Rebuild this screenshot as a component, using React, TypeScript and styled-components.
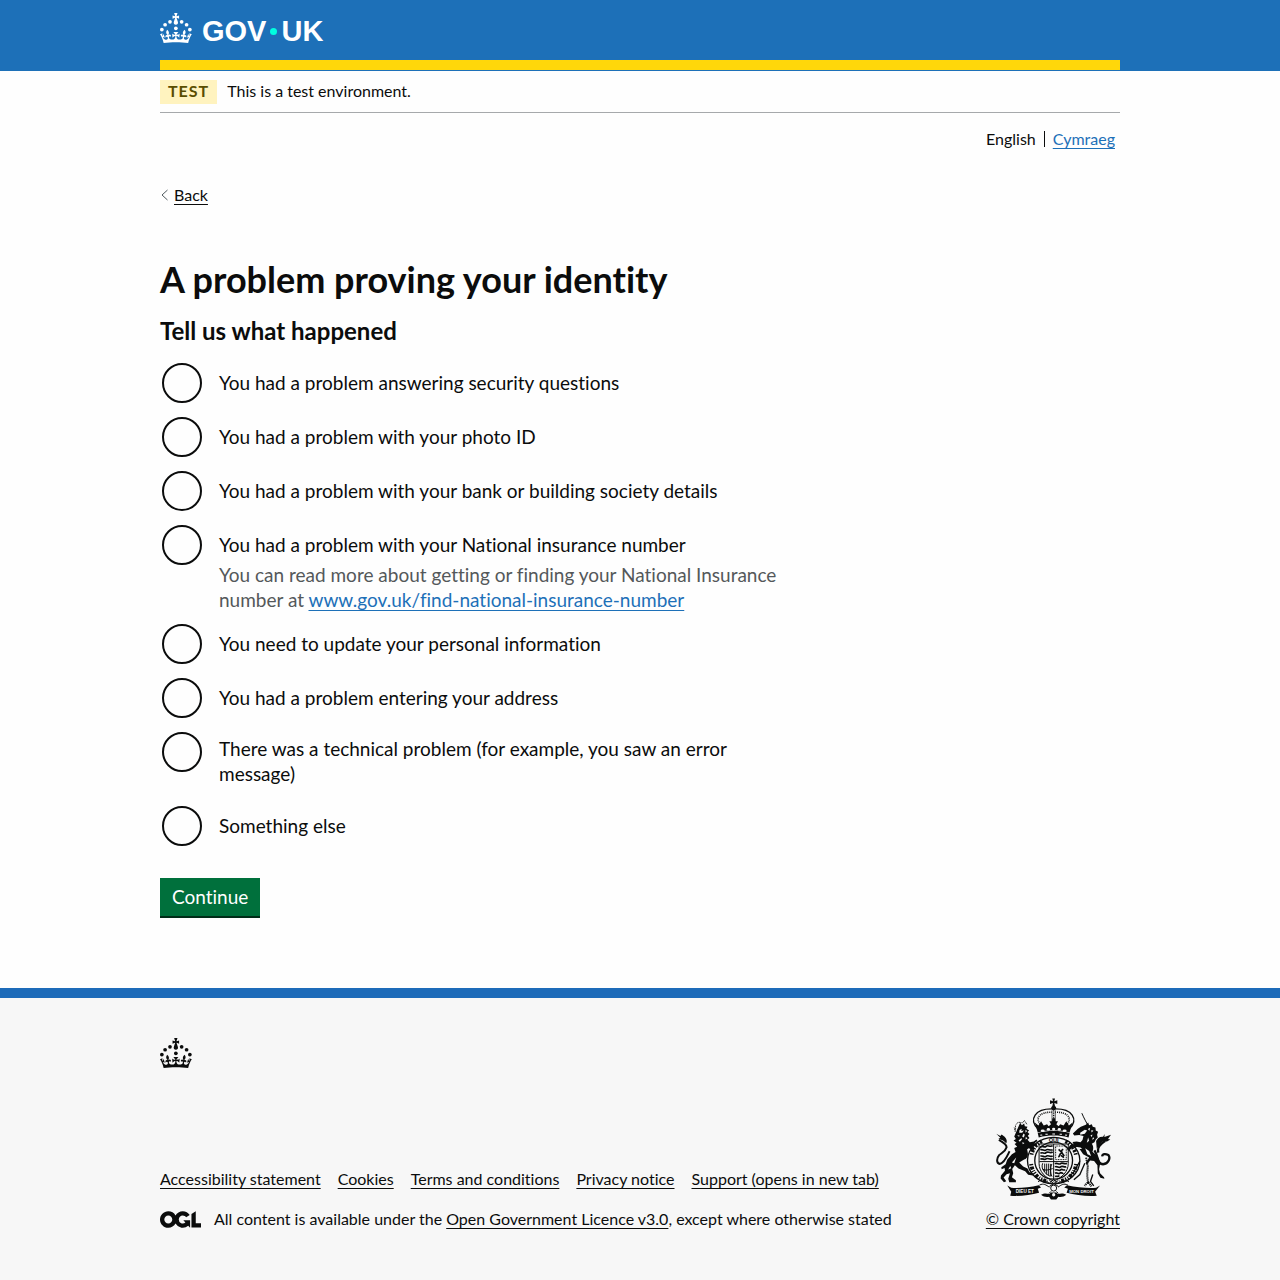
import React from "react";
import styled, { createGlobalStyle } from "styled-components";

const ink = "#0b0c0c";
const blue = "#1d70b8";

const GlobalStyle = createGlobalStyle`
  *, *::before, *::after { box-sizing: border-box; }
  html { background: #f7f7f7; }
  body {
    margin: 0;
    background: #fefefe;
    color: ${ink};
    font-family: Lato, "Open Sans", sans-serif;
    font-size: 16px;
    line-height: 20px;
    font-variant-ligatures: none;
  }
`;

const Container = styled.div`
  max-width: 960px;
  margin: 0 auto;
  @media (max-width: 1020px) { margin: 0 30px; }
`;

const Link = styled.a<{ $tone?: "link" }>`
  color: ${p => (p.$tone === "link" ? blue : ink)};
  text-decoration: underline;
  text-decoration-thickness: 1px;
  text-underline-offset: 3px;
  text-decoration-skip-ink: none;
`;

const Header = styled.header`
  background: ${blue};
  padding-bottom: 1px;
`;

const HeaderInner = styled(Container)`
  border-bottom: 10px solid #ffd70a;
  padding: 13px 0 17px;
`;

const HomeLink = styled.a`
  display: inline-flex;
  align-items: center;
  gap: 10px;
  height: 30px;
  color: #fff;
  text-decoration: none;
  vertical-align: top;
`;

const Wordmark = styled.span`
  display: flex;
  align-items: center;
  gap: 4px;
  padding-top: 6px;
  font: 700 29px/30px "Liberation Sans", Arial, sans-serif;
`;

const Dot = styled.span`
  width: 7px;
  height: 7px;
  border-radius: 50%;
  background: #00ffe0;
`;

const Crown = styled.svg`
  display: block;
  width: 32px;
  height: 30px;
  fill: currentColor;
`;

const PhaseBanner = styled.div`
  display: flex;
  align-items: center;
  gap: 10px;
  padding: 9px 0 8px;
  border-bottom: 1px solid #a6a9ab;
`;

const Tag = styled.strong`
  padding: 1px 8px 3px;
  background: #fff3bf;
  color: #594d00;
  letter-spacing: 1px;
`;

const PhaseText = styled.span`
  padding-bottom: 2px;
`;

const Languages = styled.nav`
  display: flex;
  justify-content: flex-end;
  margin-top: 16px;
  padding-right: 5px;
`;

const Language = styled.span`
  display: flex;
  align-items: center;
  & + & { margin-left: 8px; }
  & + &::before {
    content: "";
    height: 16px;
    margin-right: 8px;
    border-left: 1px solid ${ink};
  }
`;

const BackRow = styled.div`
  display: flex;
  align-items: center;
  gap: 6px;
  margin-top: 36px;
`;

const Chevron = styled.svg`
  width: 8px;
  height: 12px;
  fill: none;
  stroke: #505a5f;
`;

const Main = styled.main`
  max-width: 640px;
  padding: 54px 0 70px;
`;

const Title = styled.h1`
  margin: 0 0 17px;
  font-size: 36px;
  line-height: 40px;
`;

const Fieldset = styled.fieldset`
  margin: 0 0 30px;
  padding: 0;
  border: 0;
  min-width: 0;
`;

const Legend = styled.legend`
  margin-bottom: 15px;
  padding: 0;
  font-size: 24px;
  font-weight: 700;
  line-height: 30px;
`;

const Options = styled.div`
  display: grid;
  gap: 10px;
`;

const Option = styled.div`
  display: flex;
  gap: 15px;
  align-items: flex-start;
  font-size: 19px;
  line-height: 25px;
`;

const Radio = styled.input`
  flex: none;
  appearance: none;
  width: 40px;
  height: 40px;
  margin: 2px;
  border: 2px solid ${ink};
  border-radius: 50%;
  cursor: pointer;
  &:checked { box-shadow: inset 0 0 0 8px #fff; background: ${ink}; }
  &:focus { outline: 4px solid #ffdd00; outline-offset: 1px; }
`;

const Label = styled.label`
  display: flex;
  align-items: center;
  min-height: 44px;
  padding: 6px 0 8px;
`;

const Hint = styled.div`
  margin-top: -5px;
  color: #54585a;
`;

const Button = styled.button`
  display: block;
  margin: 0 0 2px;
  padding: 6px 12px 7px;
  border: 0;
  background: #00703c;
  box-shadow: 0 2px 0 #002d18;
  color: #fff;
  font: inherit;
  font-size: 19px;
  line-height: 25px;
  cursor: pointer;
`;

const Footer = styled.footer`
  border-top: 10px solid #1d6bb9;
  padding: 40px 0 51px;
  background: #f7f7f7;
`;

const FooterMeta = styled.div`
  display: flex;
  flex-wrap: wrap;
  align-items: flex-end;
  justify-content: space-between;
  gap: 20px;
  margin-top: 30px;
`;

const FooterLinks = styled.ul`
  display: flex;
  flex-wrap: wrap;
  gap: 10px 17px;
  margin: 0 0 20px;
  padding: 0;
  list-style: none;
`;

const Licence = styled.div`
  display: flex;
  align-items: center;
  gap: 13px;
`;

const OglLogo = styled.svg`
  flex: none;
  width: 41px;
  height: 17px;
`;

const Copyright = styled.div`
  display: flex;
  flex-direction: column;
  align-items: center;
  gap: 9px;
`;

const ArmsSvg = styled.svg`
  display: block;
  width: 116px;
  height: 102px;
  color: ${ink};
`;

const CrownIcon = () => (
  <Crown viewBox="0 0 64 60" aria-hidden="true">
    <circle cx="20" cy="17.6" r="3.7" />
    <circle cx="10.2" cy="23.5" r="3.7" />
    <circle cx="3.7" cy="33.2" r="3.7" />
    <circle cx="31.7" cy="30.6" r="3.7" />
    <circle cx="43.3" cy="17.6" r="3.7" />
    <circle cx="53.2" cy="23.5" r="3.7" />
    <circle cx="59.7" cy="33.2" r="3.7" />
    <path d="M33.1,9.8c.2-.1.3-.3.5-.5l4.6,2.4v-6.8l-4.6,1.5c-.1-.2-.3-.3-.5-.5l1.9-5.9h-6.7l1.9,5.9c-.2.1-.3.3-.5.5l-4.6-1.5v6.8l4.6-2.4c.1.2.3.3.5.5l-2.6,8c-.9,2.8,1.2,5.7,4.1,5.7h0c3,0,5.1-2.9,4.1-5.7l-2.6-8ZM37,37.9s-3.4,3.8-4.1,6.1c2.2,0,4.2-.5,6.4-2.8l-.7,8.5c-2-2.8-4.4-4.1-5.7-3.8.1,3.1.5,6.7,5.8,7.2,3.7.3,6.7-1.5,7-3.8.4-2.6-2-4.3-3.7-1.6-1.4-4.5,2.4-6.1,4.9-3.2-1.9-4.5-1.8-7.7,2.4-10.9,3,4,2.6,7.3-1.2,11.1,2.4-1.3,6.2,0,4,4.6-1.2-2.8-3.7-2.2-4.2.2-.3,1.7.7,3.7,3,4.2,1.9.3,4.7-.9,7-5.9-1.3,0-2.4.7-3.9,1.7l2.4-8c.6,2.3,1.4,3.7,2.2,4.5.6-1.6.5-2.8,0-5.3l5,1.8c-2.6,3.6-5.2,8.7-7.3,17.5-7.4-1.1-15.7-1.7-24.5-1.7h0c-8.8,0-17.1.6-24.5,1.7-2.1-8.9-4.7-13.9-7.3-17.5l5-1.8c-.5,2.5-.6,3.7,0,5.3.8-.8,1.6-2.3,2.2-4.5l2.4,8c-1.5-1-2.6-1.7-3.9-1.7,2.3,5,5.2,6.2,7,5.9,2.3-.4,3.3-2.4,3-4.2-.5-2.4-3-3.1-4.2-.2-2.2-4.6,1.6-6,4-4.6-3.7-3.7-4.2-7.1-1.2-11.1,4.2,3.2,4.3,6.4,2.4,10.9,2.5-2.8,6.3-1.3,4.9,3.2-1.8-2.7-4.1-1-3.7,1.6.3,2.3,3.3,4.1,7,3.8,5.4-.5,5.7-4.2,5.8-7.2-1.3-.2-3.7,1-5.7,3.8l-.7-8.5c2.2,2.3,4.2,2.7,6.4,2.8-.7-2.3-4.1-6.1-4.1-6.1h10.6,0Z" />
  </Crown>
);

const RoyalArms = () => (
  <ArmsSvg viewBox="46 24 350 306" role="img" aria-label="Royal coat of arms" fill="currentColor" stroke="none">
    {/* crown */}
    <path d="M219 25h8l-2 8 9-3v11l-9-3 2 9c5 3 5 9 0 12h-8c-5-3-5-9 0-12l2-9-9 3V30l9 3z" />
    <g fill="none" stroke="currentColor">
      <path strokeWidth="4" d="M176 117C146 86 168 55 219 56M270 117c30-31 8-62-43-61" />
      <path strokeWidth="5" strokeDasharray="3 3" d="M182 102c-16-21 2-37 36-36M264 102c16-21-2-37-36-36" />
      <path strokeWidth="2" d="M218 60v38M228 60v38" />
      <path strokeWidth="4" strokeDasharray="4 3" d="M223 60v40" />
    </g>
    <path d="M166 97l11 9 8-13 8 13 10-4 5 6 7-6-5-9h8l1-9h8l1 9h8l-5 9 7 6 5-6 10 4 8-13 8 13 11-9-9 30c-30-9-66-9-96 0z" />
    <path d="M175 129c30-8 66-8 96 0l-3 13c-29-8-61-8-90 0z" />
    <g fill="#f7f7f7">
      <ellipse cx="190" cy="122" rx="6" ry="4" /><ellipse cx="207" cy="118" rx="5" ry="4" />
      <ellipse cx="223" cy="117" rx="5" ry="4" /><ellipse cx="240" cy="118" rx="5" ry="4" />
      <ellipse cx="256" cy="122" rx="6" ry="4" />
      <path d="M182 134l6-1 1 3-6 1zM198 131h7v3h-7zM219 130h8v3h-8zM241 131h7v3h-7zM258 133l6 1-1 3-6-1z" />
    </g>
    {/* garter */}
    <g fill="none" stroke="currentColor">
      <ellipse cx="223" cy="212" rx="79" ry="70" strokeWidth="4" />
      <ellipse cx="223" cy="212" rx="57" ry="56" strokeWidth="4" />
      <path strokeWidth="12" strokeDasharray="4 4 9 4 3 4" d="M155 222c4 30 24 48 50 53M291 222c-4 30-24 48-50 53" />
      <path strokeWidth="12" strokeDasharray="4 4 7 4" d="M156 194c5-20 15-32 32-41M290 194c-5-20-15-32-32-41" />
    </g>
    <text x="223" y="157" textAnchor="middle" fontFamily="Liberation Sans, sans-serif" fontWeight="700" fontSize="17">QUI</text>
    {/* quartered shield */}
    <path fill="none" stroke="currentColor" strokeWidth="3" d="M179 162h88v59c0 24-18 42-44 53-26-11-44-29-44-53zM223 162v108M180 215h86" />
    <g fill="none" stroke="currentColor" strokeWidth="5">
      <path d="M183 171c6-6 12 4 17-2s12 4 20-2M183 180c6-4 12 5 17 0s12 3 20-1M183 190c6-6 12 4 17-2s12 4 20-2M183 199c6-4 12 5 17 0s12 3 20-1M183 208c6-5 12 4 17-1s12 4 20-1" />
      <path d="M227 222c6-5 12 4 17-1s12 4 19-1M227 231c6-4 12 5 17 0s12 3 17-1M227 241c6-5 12 4 17-1s8 4 14-1M227 250c6-4 10 5 15 0s6 3 10-1M227 260c5-3 8 3 13-3" />
      <path strokeWidth="3" strokeDasharray="3 2" d="M229 168h32v41h-32z" />
      <path strokeWidth="5" d="M237 201c6-2 2-9 9-11s-6-6 6-12M238 178l8 8 9 12M254 203l-9-7" />
      <path strokeWidth="3" d="M190 220c-7 15 7 33 22 39M196 221v26M202 221v33M208 221v36M214 222v38M218 222c-5 7-7 26 0 38M190 238c8 5 18 2 30-2" />
    </g>
    {/* lion */}
    <path d="M118 107l4-9 5 7 7-5 2 8 8 2-3 6 8 5-5 5 6 6-5 5 5 7-6 5 7 8 12-3 8-6 3 5-9 7 8 3-2 5-12 1 7 7-4 5-14-6-5 3 2 11c2 10-4 18-11 20l-15 9 12 12 13 6 6 11 9 2 2 8-15-2-9-11-20-8-11-10-8 11 3 13-4 12 12 9v6H89l-3-10 5-17-10 3-9 10 8 11-7 3-10-11 1-9 12-14-1-9-9 4-1-6 13-9 5-14 14-16 11-7-4-12 9-4-8-8 6-4-9-7 7-4-5-8z" />
    <path fill="#f7f7f7" d="M120 120l7-4-2 7 8-2-5 7-9 0zM113 135l8 2-3 3zM128 139l4-9 4 4-3 8zM117 151l9-7 1 4-6 7zM138 119l5 4-5 5zM139 140l5 5-6 3zM128 157l7 2-5 4zM97 218l13-15-6 17zM86 239l6-11 3 7z" />
    <path fill="none" stroke="currentColor" strokeWidth="3" strokeDasharray="3 2" d="M108 121v-16l8-9 13 2 6-7 8 13M107 125l-3-13" />
    <path fill="none" stroke="currentColor" strokeWidth="6" d="M90 184c-6 10-13 33-29 38-13-2-9-19-3-26 11-9 20-12 23-24-1-13-14-15-23-23" />
    <path d="M50 131l12 7 4-5 9 7c7 7 8 15 5 20-7-8-12-10-24-13l6-4z" />
    {/* unicorn */}
    <path fill="none" stroke="currentColor" strokeWidth="3" d="M308 69l5 11 5 10 7 13" />
    <path d="M320 104l7-7 3 8 8-3 3 8 8 2 1 9 7 4-3 9 2 8-6 6-4 9-8 4c6 7 5 19 2 24l15 13 9 20-4 20 3 12 12 12 1 5-12-3-8-14-1-24-10-13-12-1-9 12-5-4 11-17-18-10-15-22-13 1-10 6-5 5-6-6 10-10 10-4-3-7 12-2 12 3 6-7 3-12-13-3-15 1-4-6 15-14 9-6z" />
    <path fill="#f7f7f7" d="M303 128l14-9 7 2-7 10-14 3zM326 117l7-4-2 9zM337 120l6 2-6 5zM334 136l6-3-2 8zM327 142l3 10-7 6zM342 141l3 5-6 3zM318 175l12 8 6 15-11-5zM293 173l10-1 6 5-10 0z" />
    <path fill="none" stroke="currentColor" strokeWidth="6" strokeDasharray="4 2" d="M321 203l5 27-2 26 3 23M326 278l-10 10M328 278l9 12" />
    <path fill="none" stroke="currentColor" strokeWidth="4" d="M302 214l-19 34-15 12M317 220l-15 34-18 16M341 254l-7 21 10 13" />
    <path fill="none" stroke="currentColor" strokeWidth="7" d="M346 181c12 17 6 39 26 42 17-1 23-20 16-28-10-5-18-3-19 4M358 188c-6-18 10-28 20-35" />
    <path d="M351 153c4-8 10-14 21-13l5-8-1 9 20-7-9 13 7 1-10 6-14 1-11 13-6 8z" />
    {/* compartment and motto scroll */}
    <path d="M83 287l12 7c27 2 55-2 83-8l7 7-10 4 4 12c-26 7-56 11-87 9l3-12zM363 287l-12 7c-27 2-58-2-88-8l-8 7 11 4-4 12c26 7 60 11 91 9l-5-12z" />
    <g fill="#f7f7f7" fontFamily="Liberation Sans, sans-serif" fontWeight="700" fontSize="14">
      <text x="136" y="310" textAnchor="middle">DIEU ET</text>
      <text x="307" y="310" textAnchor="middle" fontSize="13">MON DROIT</text>
    </g>
    <g fill="none" stroke="currentColor" strokeWidth="3">
      <path d="M176 276c14-12 26-1 34 4l13-11 12 11c11-5 20-14 34-4M180 286c13-7 20 0 30 6M266 286c-13-7-20 0-30 6M210 272l27 18M237 272l-27 18" />
      <circle cx="223" cy="295" r="9" />
      <path d="M209 311l6-6M237 311l-6-6" />
    </g>
    <path d="M185 315c9-5 17-4 25-2l5-5h16l5 5c8-2 16-3 25 2-7 6-16 8-24 6l-6 8h-16l-6-8c-8 2-17 0-24-6z" />
    <circle cx="223" cy="315" r="5" fill="#f7f7f7" />
  </ArmsSvg>
);

const options: { id: string; label: string; hint?: React.ReactNode }[] = [
  { id: "security", label: "You had a problem answering security questions" },
  { id: "photo", label: "You had a problem with your photo ID" },
  { id: "bank", label: "You had a problem with your bank or building society details" },
  {
    id: "nino",
    label: "You had a problem with your National insurance number",
    hint: (
      <>
        You can read more about getting or finding your National Insurance number at{" "}
        <Link $tone="link" href="#nino">www.gov.uk/find-national-insurance-number</Link>
      </>
    ),
  },
  { id: "update", label: "You need to update your personal information" },
  { id: "address", label: "You had a problem entering your address" },
  { id: "technical", label: "There was a technical problem (for example, you saw an error message)" },
  { id: "other", label: "Something else" },
];

const footerLinks = [
  "Accessibility statement",
  "Cookies",
  "Terms and conditions",
  "Privacy notice",
  "Support (opens in new tab)",
];

export default function App() {
  return (
    <>
      <GlobalStyle />
      <Header>
        <HeaderInner>
          <HomeLink href="#home" aria-label="GOV.UK">
            <CrownIcon />
            <Wordmark>
              <span>GOV</span>
              <Dot />
              <span>UK</span>
            </Wordmark>
          </HomeLink>
        </HeaderInner>
      </Header>

      <Container>
        <PhaseBanner>
          <Tag>TEST</Tag>
          <PhaseText>This is a test environment.</PhaseText>
        </PhaseBanner>
        <Languages aria-label="Language">
          <Language>English</Language>
          <Language><Link $tone="link" href="#cy" lang="cy">Cymraeg</Link></Language>
        </Languages>
        <BackRow>
          <Chevron viewBox="0 0 8 12" aria-hidden="true"><path d="M7.5 1L2 6l5.5 5" /></Chevron>
          <Link href="#back">Back</Link>
        </BackRow>

        <Main>
          <Title>A problem proving your identity</Title>
          <form onSubmit={e => e.preventDefault()}>
            <Fieldset>
              <Legend>Tell us what happened</Legend>
              <Options>
                {options.map(o => (
                  <Option key={o.id}>
                    <Radio
                      type="radio"
                      name="problem"
                      id={o.id}
                      value={o.id}
                      aria-describedby={o.hint ? `${o.id}-hint` : undefined}
                    />
                    <div>
                      <Label htmlFor={o.id}>{o.label}</Label>
                      {o.hint && <Hint id={`${o.id}-hint`}>{o.hint}</Hint>}
                    </div>
                  </Option>
                ))}
              </Options>
            </Fieldset>
            <Button type="submit">Continue</Button>
          </form>
        </Main>
      </Container>

      <Footer>
        <Container>
          <CrownIcon />
          <FooterMeta>
            <div>
              <FooterLinks>
                {footerLinks.map(t => (
                  <li key={t}><Link href="#footer">{t}</Link></li>
                ))}
              </FooterLinks>
              <Licence>
                <OglLogo viewBox="0 0 483.2 195.7" aria-hidden="true">
                  <path fill={ink} d="M421.5 142.8V.1l-50.7 32.3v161.1h112.4v-50.7zm-122.3-9.6A47.12 47.12 0 0 1 221 97.8c0-26 21.1-47.1 47.1-47.1 16.7 0 31.4 8.7 39.7 21.8l42.7-27.2A97.63 97.63 0 0 0 268.1 0c-36.5 0-68.3 20.1-85.1 49.7A98 98 0 0 0 97.8 0C43.9 0 0 43.9 0 97.8s43.9 97.8 97.8 97.8c36.5 0 68.3-20.1 85.1-49.7a97.76 97.76 0 0 0 149.6 25.4l19.4 22.2h3v-87.8h-80l24.3 27.5zM97.8 145c-26 0-47.1-21.1-47.1-47.1s21.1-47.1 47.1-47.1 47.1 21.1 47.1 47.1S123.8 145 97.8 145" />
                </OglLogo>
                <span>
                  All content is available under the <Link href="#ogl">Open Government Licence v3.0</Link>, except where
                  otherwise stated
                </span>
              </Licence>
            </div>
            <Copyright>
              <RoyalArms />
              <Link href="#copyright">© Crown copyright</Link>
            </Copyright>
          </FooterMeta>
        </Container>
      </Footer>
    </>
  );
}
